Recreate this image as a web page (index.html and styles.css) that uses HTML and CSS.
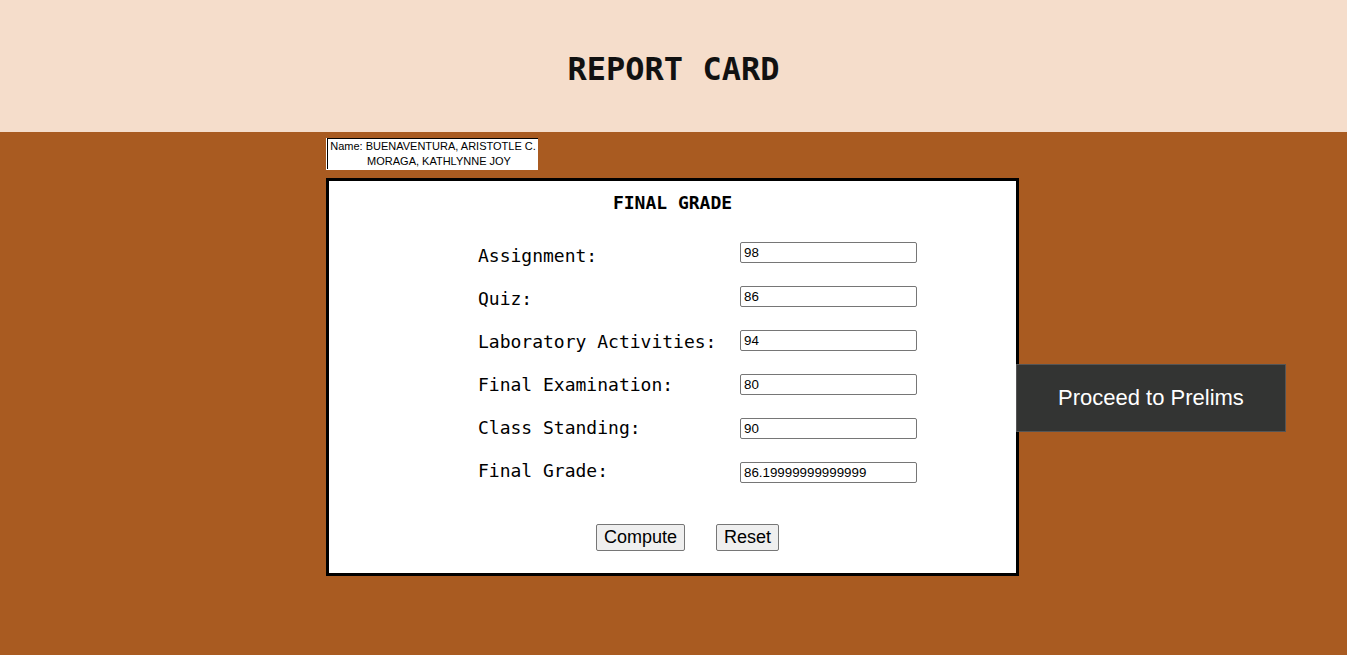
FILE: index.html
```html
<!DOCTYPE html>
<html lang="en">
<head>
<meta charset="utf-8">
<meta name="viewport" content="width=device-width, initial-scale=1">
<title>Report Card</title>
<link rel="stylesheet" href="styles.css">
</head>
<body>
<header class="banner"><h1 class="banner-title">REPORT CARD</h1></header>
<main class="content">
  <div class="authors">
    <p class="authors-text">Name: BUENAVENTURA, ARISTOTLE C.<span class="second-author">MORAGA, KATHLYNNE JOY</span></p>
  </div>
  <form class="card">
    <h2 class="card-title">FINAL GRADE</h2>
    <div class="fields">
      <div class="labels">
        <label for="assignment">Assignment:</label>
        <label for="quiz">Quiz:</label>
        <label for="laboratory">Laboratory Activities:</label>
        <label for="examination">Final Examination:</label>
        <label for="standing">Class Standing:</label>
        <label for="grade">Final Grade:</label>
      </div>
      <div class="inputs">
        <input class="field" type="text" id="assignment" value="98">
        <input class="field" type="text" id="quiz" value="86">
        <input class="field" type="text" id="laboratory" value="94">
        <input class="field" type="text" id="examination" value="80">
        <input class="field" type="text" id="standing" value="90">
        <input class="field" type="text" id="grade" value="86.19999999999999">
      </div>
    </div>
    <div class="actions">
      <button class="action" type="button">Compute</button>
      <button class="action" type="reset">Reset</button>
    </div>
  </form>
  <a class="proceed" href="#prelims">Proceed to Prelims</a>
</main>
</body>
</html>
```
FILE: styles.css
```css
* {
  box-sizing: border-box;
}

body {
  margin: 0;
  background: #a95b21;
  color: #000;
  font-family: "Liberation Sans", Arial, sans-serif;
}

.banner {
  padding: 51px 16px 45px;
  background: #f5ddcb;
  text-align: center;
}

.banner-title {
  margin: 0;
  color: #111;
  font: bold 32px/36px "DejaVu Sans Mono", monospace;
}

.content {
  position: relative;
  max-width: 695px;
  margin: 0 auto;
  padding: 6px 2px 24px 0;
}

.authors {
  width: 212px;
  padding: 0 0 1px 1px;
  background: #fff;
}

.authors-text {
  margin: 0;
  border-top: 1px solid #000;
  border-left: 1px solid #000;
  font-size: 11px;
  line-height: 15px;
  text-align: center;
  white-space: nowrap;
}

.second-author {
  display: block;
  padding-left: 12px;
}

.card {
  margin-top: 8px;
  padding: 10px 0 22px;
  border: 3px solid #000;
  background: #fff;
}

.card-title {
  margin: 0;
  font: bold 18px/24px "DejaVu Sans Mono", monospace;
  text-align: center;
}

.fields {
  display: flex;
  justify-content: center;
  gap: 20px;
  margin-top: 19px;
  padding-left: 50px;
}

.labels {
  display: flex;
  flex-direction: column;
  width: 242px;
  font: 18px/43px "DejaVu Sans Mono", monospace;
}

.inputs {
  display: flex;
  flex-direction: column;
  gap: 23px;
  padding-top: 8px;
}

.field {
  width: 177px;
  height: 21px;
  padding: 1px 3px;
  border: 1px solid #767676;
  border-radius: 2px;
  background: #fff;
  color: #000;
  font-family: "Liberation Sans", Arial, sans-serif;
}

.actions {
  display: flex;
  justify-content: center;
  gap: 31px;
  margin-top: 32px;
  padding-left: 30px;
}

.action {
  height: 27px;
  padding: 0 7px 2px;
  border: 1px solid #767676;
  border-radius: 2px;
  background: #efefef;
  color: #000;
  font: 18px/20px "Liberation Sans", Arial, sans-serif;
}

.proceed {
  position: absolute;
  top: 232px;
  left: calc(100% - 5px);
  padding: 20px 41px;
  border: 1px solid #555;
  background: #333433;
  color: #fff;
  font-size: 22px;
  line-height: 26px;
  text-decoration: none;
  white-space: nowrap;
}
```
